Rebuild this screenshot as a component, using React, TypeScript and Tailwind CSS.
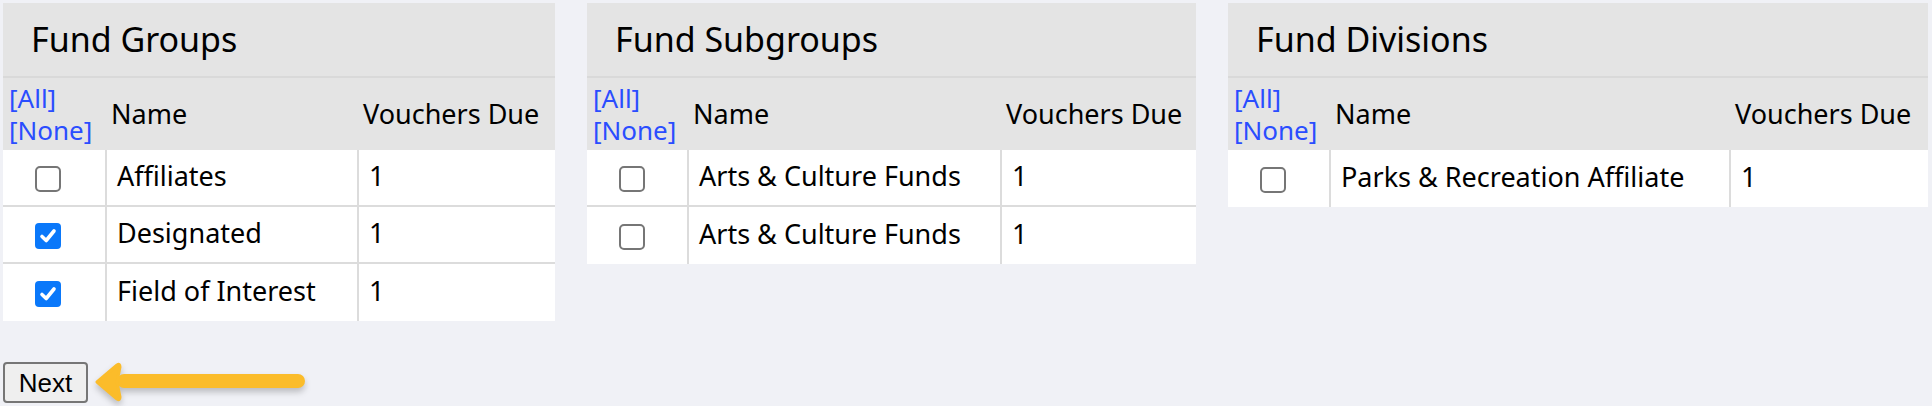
import { useState } from "react";

interface Fund {
  name: string;
  due: number;
  checked: boolean;
}

interface PanelProps {
  title: string;
  cols: string;
  width: string;
  rows: Fund[];
}

const Checkbox = ({ checked, onClick }: { checked: boolean; onClick: () => void }) => {
  if (checked) {
    return (
      <span
        onClick={onClick}
        className="w-[26px] h-[26px] rounded-[4px] bg-[#0a78fa] flex items-center justify-center cursor-pointer"
      >
        <svg width="20" height="20" viewBox="0 0 20 20">
          <path d="M4 10.5 L8.2 14.5 L16 5" fill="none" stroke="white" strokeWidth="3.6" strokeLinecap="round" strokeLinejoin="round" />
        </svg>
      </span>
    );
  }
  return (
    <span
      onClick={onClick}
      className="w-[26px] h-[26px] rounded-[5px] border-2 border-[#767676] bg-white cursor-pointer"
    />
  );
};

const Panel = ({ title, cols, width, rows }: PanelProps) => {
  const [items, setItems] = useState<Fund[]>(rows);

  const toggle = (i: number) => {
    setItems(prev => prev.map((r, idx) => (idx === i ? { ...r, checked: !r.checked } : r)));
  };

  return (
    <div className={`${width} shrink-0 text-[27px] text-black`}>
      <div className="h-[75px] bg-[#e4e4e4] border-b-2 border-[#d9d9d9] flex items-center pl-[28px] text-[34px]">
        {title}
      </div>
      <div className={`grid ${cols} h-[72px] bg-[#e4e4e4] items-center`}>
        <div className="pl-[6px] text-[26px] leading-[32px] text-[#2a4dff]">
          <a className="block cursor-pointer" onClick={() => setItems(prev => prev.map(r => ({ ...r, checked: true })))}>[All]</a>
          <a className="block cursor-pointer" onClick={() => setItems(prev => prev.map(r => ({ ...r, checked: false })))}>[None]</a>
        </div>
        <div className="pl-[4px]">Name</div>
        <div className="pl-[4px]">Vouchers Due</div>
      </div>
      {items.map((r, i) => (
        <div
          key={i}
          className={`grid ${cols} h-[57px] bg-white ${i < items.length - 1 ? "border-b-2 border-[#dcdcdc]" : ""}`}
        >
          <div className="border-r-2 border-[#dcdcdc] flex items-center pl-[32px] pt-[2px]">
            <Checkbox checked={r.checked} onClick={() => toggle(i)} />
          </div>
          <div className="border-r-2 border-[#dcdcdc] flex items-center pl-[10px] pb-[3px]">{r.name}</div>
          <div className="flex items-center pl-[10px] pb-[3px]">{r.due}</div>
        </div>
      ))}
    </div>
  );
};

export default function App() {
  return (
    <div className="min-h-screen bg-[#f0f1f6] p-[3px]" style={{ fontFamily: '"Noto Sans", sans-serif' }}>
      <div className="flex items-start gap-[32px]">
        <Panel
          title="Fund Groups"
          width="w-[552px]"
          cols="grid-cols-[104px_252px_196px]"
          rows={[
            { name: "Affiliates", due: 1, checked: false },
            { name: "Designated", due: 1, checked: true },
            { name: "Field of Interest", due: 1, checked: true },
          ]}
        />
        <Panel
          title="Fund Subgroups"
          width="w-[609px]"
          cols="grid-cols-[102px_313px_194px]"
          rows={[
            { name: "Arts & Culture Funds", due: 1, checked: false },
            { name: "Arts & Culture Funds", due: 1, checked: false },
          ]}
        />
        <Panel
          title="Fund Divisions"
          width="w-[700px]"
          cols="grid-cols-[103px_400px_197px]"
          rows={[{ name: "Parks & Recreation Affiliate", due: 1, checked: false }]}
        />
      </div>
      <div className="flex items-center h-[41px] mt-[41px]">
        <button
          className="w-[85px] h-[41px] rounded-[4px] border-2 border-[#767676] bg-[#efefef] text-[26px] text-black leading-none"
          style={{ fontFamily: '"Liberation Sans", Arial, sans-serif' }}
        >
          Next
        </button>
        <svg
          width="224"
          height="50"
          viewBox="0 0 224 50"
          className="shrink-0 ml-[2px] drop-shadow-[0_4px_3px_rgba(0,0,0,0.22)]"
        >
          <line x1="34" y1="23" x2="208" y2="23" stroke="#fbbc2a" strokeWidth="14" strokeLinecap="round" />
          <path
            d="M7 24 L27 7 Q30 5 30 9 L27 24 L30 39 Q30 43 27 41 Z"
            fill="#fbbc2a"
            stroke="#fbbc2a"
            strokeWidth="3"
            strokeLinejoin="round"
          />
        </svg>
      </div>
    </div>
  );
}
